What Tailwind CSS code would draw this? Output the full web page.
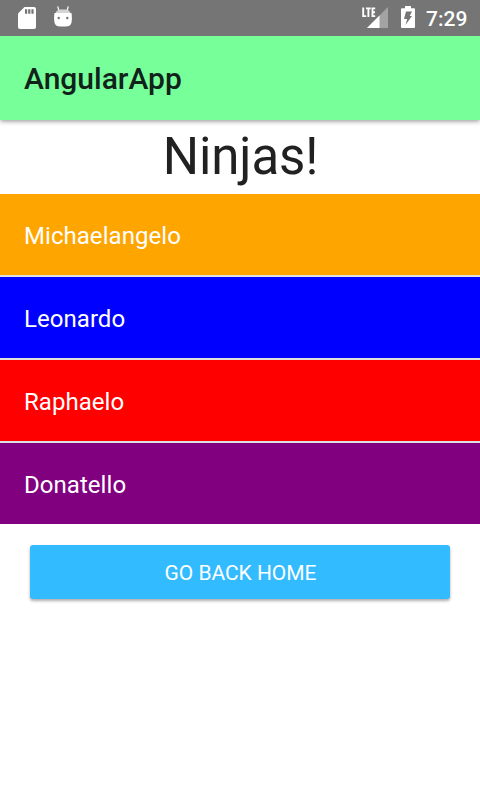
<!DOCTYPE html>
<html lang="en">
<head>
<meta charset="utf-8">
<title>AngularApp</title>
<script src="https://cdn.jsdelivr.net/npm/@tailwindcss/browser@4"></script>
</head>
<body class="w-[480px] h-[800px] overflow-hidden bg-white flex flex-col font-[Roboto,sans-serif] text-[#212121]">
  <div class="relative z-10 h-9 shrink-0 bg-[#757575] flex items-start text-white">
    <svg class="ml-[18px] mt-[7px] w-[18px] h-[22px]" viewBox="0 0 18 22"><path fill="#fff" d="M6.500 0H16a2 2 0 0 1 2 2v18a2 2 0 0 1-2 2H2a2 2 0 0 1-2-2V6.500z"/><path fill="#757575" d="M7 2.300h2.200v4.500H7zM10.200 2.300h2.200v4.500h-2.200zM13.400 2.300h2.200v4.500h-2.200z"/></svg>
    <svg class="ml-[18px] mt-[6px] w-[18px] h-[21px]" viewBox="0 0 18 21"><path d="M3.700 .3 4.800 4.500M14.300 .3 13.200 4.500" stroke="#fff" stroke-width="1.200"/><path fill="#fff" d="M.5 7h17Q18 10 17.900 13.500 17.800 17.500 16.300 19 15 20.500 9 20.500T1.700 19Q.2 17.500 .1 13.500 0 10 .5 7z"/><path fill="#d4d4d4" d="M1.500 7Q3 3.500 6 3.500h6q3 0 4.500 3.500z"/><circle cx="4.700" cy="12" r="1.200" fill="#757575"/><circle cx="13.300" cy="12" r="1.200" fill="#757575"/></svg>
    <svg class="ml-[290px] mt-[7px] w-[26px] h-[21px]" viewBox="0 0 26 21"><path fill="#a3a3a3" d="M26 0v21H5z"/><path fill="#fff" d="M17.500 8.500V21H5z"/><path fill="#757575" d="M0 0h14v11H0z"/><path fill="none" stroke="#fff" stroke-width="1.900" d="M1.200.5v8.600h3M4 1.400h4.800M6.400 1.400V10M13.200 1.400h-2.700v7.700h2.700M10.500 5.200h2.500"/></svg>
    <svg class="ml-[13px] mt-[6px] w-[14px] h-[22px]" viewBox="0 0 14 22"><path fill="#fff" d="M4 0h6v2.300h3a1 1 0 0 1 1 1V21a1 1 0 0 1-1 1H1a1 1 0 0 1-1-1V3.300a1 1 0 0 1 1-1h3z"/><path fill="#757575" d="M5 5.500h6L8.700 10H11L4.500 19l1.700-6H3z"/></svg>
    <span class="ml-[11px] text-[21px] leading-[38px] font-medium">7:29</span>
  </div>
  <header class="relative h-[84px] shrink-0 bg-[#77ff99] px-6 shadow-[0_1px_5px_rgba(0,0,0,0.45)]">
    <h1 class="text-[30px] leading-[86px] font-medium text-[#10221a]">AngularApp</h1>
  </header>
  <main class="flex flex-col">
    <h2 class="h-[74px] text-center text-[51px] leading-[73px] tracking-[-0.1px] pl-px">Ninjas!</h2>
    <ul class="flex flex-col gap-[2px] bg-[#e0e0e0] text-white text-2xl tracking-[0.05px]">
      <li class="h-[81px] px-6 leading-[85px] bg-[#ffa500]">Michaelangelo</li>
      <li class="h-[81px] px-6 leading-[85px] bg-[#0000ff]">Leonardo</li>
      <li class="h-[81px] px-6 leading-[85px] bg-[#ff0000]">Raphaelo</li>
      <li class="h-[81px] px-6 leading-[85px] bg-[#800080]">Donatello</li>
    </ul>
    <button class="mx-[30px] mt-[21px] h-[54px] rounded-[3px] bg-[#33bbff] text-white text-[21px] leading-[52px] pt-[2px] pl-px tracking-[-0.05px] shadow-[0_2px_3px_rgba(0,0,0,0.32)]">GO BACK HOME</button>
  </main>
</body>
</html>
